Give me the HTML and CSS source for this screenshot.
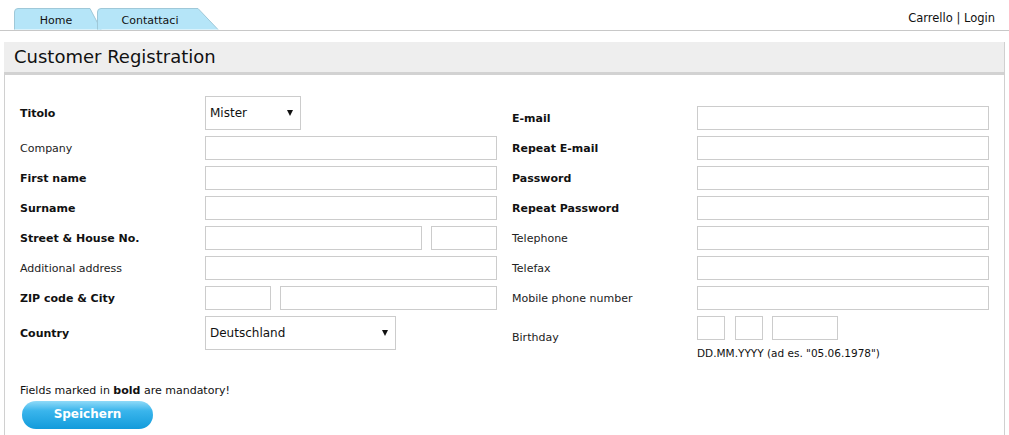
FILE: index.html
```html
<!DOCTYPE html>
<html lang="it">
<head>
<meta charset="utf-8">
<title>Customer Registration</title>
<link rel="stylesheet" href="styles.css">
</head>
<body>
<div class="topbar">
  <nav class="tabs">
    <a class="tab tab-home" href="#">
      <svg class="tab-shape" width="88" height="22" viewBox="0 0 88 22"><path d="M0.5 21.5 V4 Q0.5 0.5 4 0.5 H76 L87 21.5" fill="#b5e5f8" stroke="#9fc8d8"/></svg>
      <span class="tab-label">Home</span>
    </a>
    <a class="tab tab-contact" href="#">
      <svg class="tab-shape" width="122" height="22" viewBox="0 0 122 22"><path d="M0.5 21.5 V4 Q0.5 0.5 4 0.5 H101 L121 21.5" fill="#b5e5f8" stroke="#9fc8d8"/></svg>
      <span class="tab-label">Contattaci</span>
    </a>
  </nav>
  <div class="userlinks"><a href="#">Carrello</a> | <a href="#">Login</a></div>
</div>

<main class="panel">
  <h1 class="panel-title">Customer Registration</h1>
  <form class="reg-form">
    <div class="columns">
      <div class="col col-left">
        <label class="lbl req row-tall">Titolo</label>
        <div class="field row-tall"><span class="select-wrap sel-title"><select><option>Mister</option><option>Mrs</option></select></span></div>

        <label class="lbl">Company</label>
        <div class="field"><input class="inp w-full" type="text"></div>

        <label class="lbl req">First name</label>
        <div class="field"><input class="inp w-full" type="text"></div>

        <label class="lbl req">Surname</label>
        <div class="field"><input class="inp w-full" type="text"></div>

        <label class="lbl req">Street &amp; House No.</label>
        <div class="field pair"><input class="inp w-long" type="text"><input class="inp w-short" type="text"></div>

        <label class="lbl">Additional address</label>
        <div class="field"><input class="inp w-full" type="text"></div>

        <label class="lbl req">ZIP code &amp; City</label>
        <div class="field pair"><input class="inp w-short" type="text"><input class="inp w-long" type="text"></div>

        <label class="lbl req row-tall">Country</label>
        <div class="field row-tall"><span class="select-wrap sel-country"><select><option>Deutschland</option><option>Italia</option></select></span></div>
      </div>

      <div class="col col-right">
        <label class="lbl req">E-mail</label>
        <div class="field"><input class="inp w-full" type="text"></div>

        <label class="lbl req">Repeat E-mail</label>
        <div class="field"><input class="inp w-full" type="text"></div>

        <label class="lbl req">Password</label>
        <div class="field"><input class="inp w-full" type="password"></div>

        <label class="lbl req">Repeat Password</label>
        <div class="field"><input class="inp w-full" type="password"></div>

        <label class="lbl">Telephone</label>
        <div class="field"><input class="inp w-full" type="text"></div>

        <label class="lbl">Telefax</label>
        <div class="field"><input class="inp w-full" type="text"></div>

        <label class="lbl">Mobile phone number</label>
        <div class="field"><input class="inp w-full" type="text"></div>

        <label class="lbl">Birthday</label>
        <div class="field birthday">
          <div class="bday-inputs">
            <input class="inp w-day" type="text"><input class="inp w-day w-month" type="text"><input class="inp w-year" type="text">
          </div>
          <div class="hint">DD.MM.YYYY (ad es. "05.06.1978")</div>
        </div>
      </div>
    </div>

    <p class="note">Fields marked in <b>bold</b> are mandatory!</p>
    <button class="btn-save" type="submit">Speichern</button>
  </form>
</main>
</body>
</html>
```

FILE: styles.css
```css
html, body {
  margin: 0;
  padding: 0;
  background: #ffffff;
}

body {
  font-family: "DejaVu Sans", Verdana, sans-serif;
  font-size: 11px;
  color: #111;
}

a {
  color: #111;
  text-decoration: none;
}

/* top bar */
.topbar {
  height: 30px;
  border-bottom: 1px solid #c8c8c8;
  display: flex;
  justify-content: space-between;
  align-items: flex-end;
}

.tabs {
  display: flex;
  padding-left: 14px;
  height: 22px;
}

.tab {
  position: relative;
  height: 22px;
  display: flex;
  align-items: center;
  justify-content: center;
  color: #111;
}

.tab-home {
  width: 88px;
}

.tab-contact {
  width: 122px;
  margin-left: -5px;
}

.tab-shape {
  position: absolute;
  left: 0;
  top: 0;
}

.tab-label {
  position: relative;
  padding-top: 2px;
}

.tab-home .tab-label {
  margin-right: 4px;
}

.tab-contact .tab-label {
  margin-right: 16px;
}

.userlinks {
  padding-right: 14px;
  padding-bottom: 5px;
  color: #222;
  font-size: 11.5px;
}

/* panel */
.panel {
  margin: 11px 4px 0 4px;
  border-left: 1px solid #d0d0d0;
  border-right: 1px solid #d0d0d0;
  min-height: 400px;
}

.panel-title {
  margin: 0 0 0 -1px;
  height: 30px;
  line-height: 30px;
  padding-left: 10px;
  background: #eeeeee;
  border-bottom: 3px solid #d2d2d2;
  font-size: 18px;
  font-weight: normal;
  color: #111;
}

.reg-form {
  padding: 21px 14px 0 15px;
}

.columns {
  display: flex;
  gap: 15px;
  align-items: flex-start;
}

.col {
  display: grid;
  grid-template-columns: 185px 292px;
  row-gap: 6px;
}

.col-right {
  padding-top: 10px;
}

.lbl {
  display: flex;
  align-items: center;
  min-height: 24px;
  font-size: 11px;
  color: #222;
}

.lbl.req {
  font-weight: bold;
  color: #111;
}

.row-tall {
  min-height: 34px;
}

.field {
  display: flex;
  align-items: center;
}

.pair {
  gap: 9px;
}

.inp {
  box-sizing: border-box;
  height: 24px;
  border: 1px solid #cccccc;
  background: #fff;
  padding: 2px 4px;
  font-family: "DejaVu Sans", Verdana, sans-serif;
  font-size: 12px;
  margin: 0;
  outline: none;
}

.w-full { width: 292px; }
.w-long { width: 217px; }
.w-short { width: 66px; }
.w-day { width: 28px; }
.w-year { width: 66px; }

.bday-inputs {
  display: flex;
  gap: 10px;
}

.bday-inputs .w-year {
  margin-left: -1px;
}

.birthday {
  flex-direction: column;
  align-items: flex-start;
}

.hint {
  margin-top: 7px;
  font-size: 10.5px;
  line-height: 12px;
  color: #111;
}

.select-wrap {
  position: relative;
  display: inline-block;
}

.select-wrap select {
  -webkit-appearance: none;
  appearance: none;
  box-sizing: border-box;
  height: 34px;
  border: 1px solid #cccccc;
  border-radius: 0;
  background: #fff;
  padding: 0 4px;
  font-family: "DejaVu Sans", Verdana, sans-serif;
  font-size: 12px;
  color: #111;
  margin: 0;
  outline: none;
}

.sel-title select { width: 96px; }
.sel-country select { width: 191px; }

.select-wrap::after {
  content: "";
  position: absolute;
  right: 8px;
  top: 14px;
  border-left: 3px solid transparent;
  border-right: 3px solid transparent;
  border-top: 6px solid #111;
  pointer-events: none;
}

.note {
  margin: 26px 0 4px 0;
  font-size: 11px;
  line-height: 12px;
  color: #111;
}

.btn-save {
  margin-left: 2px;
  width: 131px;
  height: 28px;
  border: none;
  border-radius: 14px;
  background: linear-gradient(to bottom, #8fdaf8 0%, #3ab5ec 35%, #129bdb 100%);
  color: #fff;
  font-family: "DejaVu Sans", Verdana, sans-serif;
  font-weight: bold;
  font-size: 12px;
  padding: 0 0 2px 0;
  cursor: pointer;
}
```
